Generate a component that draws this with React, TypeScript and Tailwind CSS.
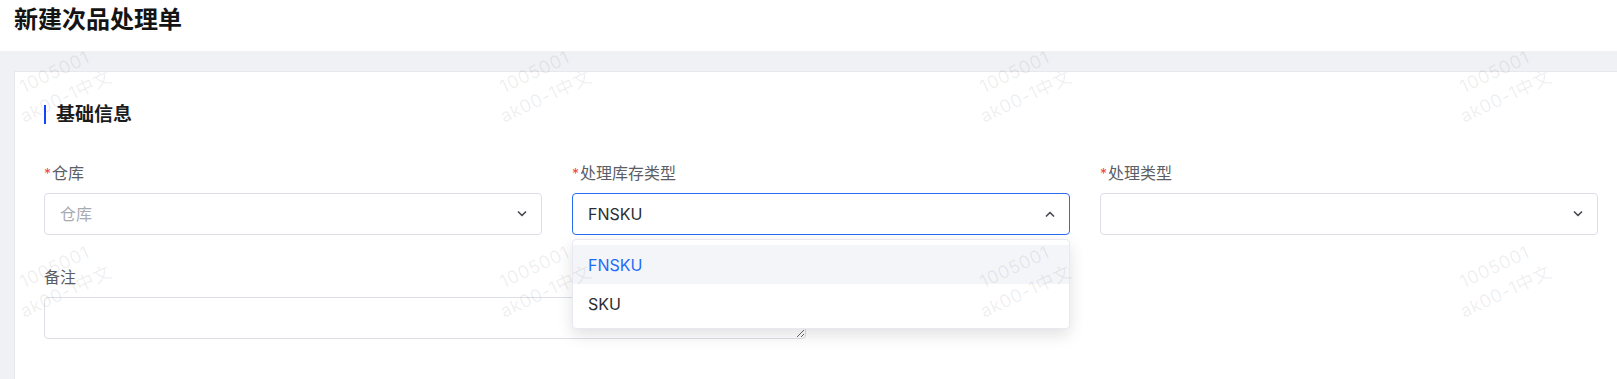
import React from "react";

const Chevron = ({ up = false }: { up?: boolean }) => (
  <svg width="10" height="6" viewBox="0 0 10 6" fill="none" className="shrink-0">
    <path
      d={up ? "M1.5 5 L5 1.5 L8.5 5" : "M1.5 1 L5 4.5 L8.5 1"}
      stroke="#4b4e54"
      strokeWidth="1.7"
      strokeLinecap="round"
      strokeLinejoin="round"
    />
  </svg>
);

function Label({ text, required }: { text: string; required?: boolean }) {
  return (
    <div className="flex items-center h-[24px] mb-[8px] text-[16px] leading-[24px] text-[#5b5e66]">
      {required && <span className="text-[#f04646] text-[14px] leading-[14px] mr-[1px] mt-[2px]">*</span>}
      {text}
    </div>
  );
}

const watermarks = Array.from({ length: 8 });

export default function App() {
  return (
    <div className="relative w-[1617px] h-[379px] overflow-hidden bg-white font-['Inter','Noto_Sans_CJK_SC',sans-serif]">
      {/* Header */}
      <header className="h-[51px] px-[14px]">
        <h1 className="text-[24px] font-bold leading-[40px] text-[#141414]">新建次品处理单</h1>
      </header>

      {/* Body */}
      <main className="h-[328px] overflow-hidden bg-[#f0f1f5] pt-[20px] pl-[14px]">
        <div className="w-[1640px] h-[340px] bg-white border border-[#e6e8ee] pl-[29px] pt-[33px]">
          {/* Section title */}
          <div className="flex items-center gap-[10px] h-[19px]">
            <span className="w-[2px] h-[19px] bg-[#1745ff]" />
            <h2 className="text-[19px] font-bold leading-[19px] text-[#1c1c1c]">基础信息</h2>
          </div>

          <div className="grid grid-cols-[repeat(3,498px)] gap-x-[30px] mt-[37px]">
            <div>
              <Label text="仓库" required />
              <div className="flex items-center justify-between h-[42px] px-[15px] pr-[14px] border border-[#dcdfe6] rounded-[4px] bg-white">
                <span className="text-[16px] text-[#a8abb2]">仓库</span>
                <Chevron />
              </div>
            </div>

            <div>
              <Label text="处理库存类型" required />
              <div className="relative">
                <div className="flex items-center justify-between h-[42px] px-[15px] pr-[14px] border border-[#2a6bf5] rounded-[4px] bg-white">
                  <span className="text-[16px] text-[#2b2d31]">FNSKU</span>
                  <Chevron up />
                </div>
                <ul className="absolute z-10 top-[46px] left-0 right-0 py-[5px] bg-white border border-[#e8eaef] rounded-[4px] shadow-[0_6px_16px_rgba(0,0,0,0.12)]">
                  <li className="h-[39px] flex items-center px-[15px] bg-[#f4f5f8] text-[16px] text-[#1f6bf8]">FNSKU</li>
                  <li className="h-[39px] flex items-center px-[15px] text-[16px] text-[#2b2d31]">SKU</li>
                </ul>
              </div>
            </div>

            <div>
              <Label text="处理类型" required />
              <div className="flex items-center justify-end h-[42px] px-[15px] pr-[14px] border border-[#dcdfe6] rounded-[4px] bg-white">
                <Chevron />
              </div>
            </div>
          </div>

          <div className="mt-[30px]">
            <Label text="备注" />
            <textarea className="block w-[762px] h-[42px] border border-[#dcdfe6] rounded-[4px] resize" />
          </div>
        </div>
      </main>

      {/* Watermark overlay */}
      <div className="absolute inset-0 pointer-events-none z-20">
        <div className="absolute left-[-180px] top-[-14px] grid grid-cols-[repeat(4,480px)] auto-rows-[195px]">
          {watermarks.map((_, i) => (
            <div key={i} className="flex items-center justify-center">
              <div className="rotate-[-25deg] text-center text-[18px] leading-[27px] tracking-[0.5px] text-[rgba(0,0,0,0.075)] whitespace-nowrap">
                <div>1005001</div>
                <div>ak00-1中文</div>
              </div>
            </div>
          ))}
        </div>
      </div>
    </div>
  );
}
